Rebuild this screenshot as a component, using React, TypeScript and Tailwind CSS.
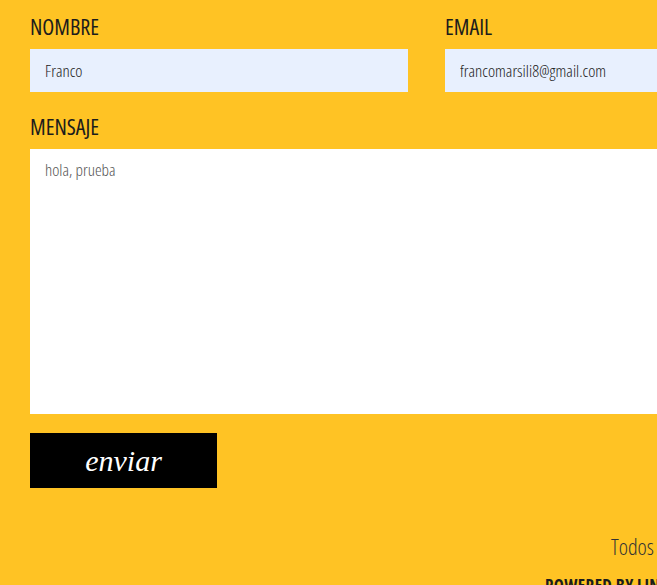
export default function App() {
  return (
    <div className="h-[585px] w-full overflow-hidden bg-[#ffc324] font-['Open_Sans','Liberation_Sans_Narrow',sans-serif] font-stretch-condensed text-[#1c1c1c]">
      <div className="w-[860px] px-[30px] pt-[14px]">
        <form className="flex flex-col">
          <div className="flex gap-[37px]">
            <label className="flex w-[378px] flex-col">
              <span className="h-[35px] text-[22px] leading-[24px]">NOMBRE</span>
              <input
                className="h-[43px] bg-[#e8f0fe] px-[15px] text-[17px] font-light text-[#222] outline-none"
                defaultValue="Franco"
              />
            </label>
            <label className="flex w-[378px] flex-col">
              <span className="h-[35px] text-[22px] leading-[24px]">EMAIL</span>
              <input
                className="h-[43px] bg-[#e8f0fe] px-[15px] text-[17px] font-light text-[#222] outline-none"
                defaultValue="francomarsili8@gmail.com"
              />
            </label>
          </div>
          <label className="mt-[22px] flex flex-col">
            <span className="h-[35px] text-[22px] leading-[24px]">MENSAJE</span>
            <textarea
              className="h-[265px] w-[793px] resize-none bg-white px-[15px] py-[8px] text-[17px] font-light text-[#555] outline-none"
              defaultValue="hola, prueba"
            />
          </label>
          <button
            type="button"
            className="mt-[19px] h-[55px] w-[187px] bg-black font-['Liberation_Serif',serif] text-[30px] italic text-white"
          >
            enviar
          </button>
        </form>
        <p className="mt-[43px] whitespace-nowrap pl-[581px] text-[22px] font-light leading-[30px] text-[#333]">
          Todos los derechos reservados
        </p>
        <p className="mt-[15px] whitespace-nowrap pl-[515px] text-[17px] font-bold leading-[20px] tracking-wide">
          POWERED BY LINKERS
        </p>
      </div>
    </div>
  );
}
